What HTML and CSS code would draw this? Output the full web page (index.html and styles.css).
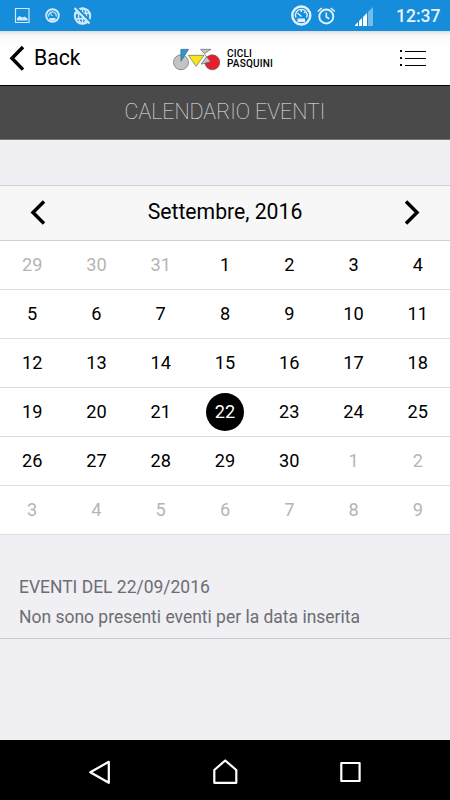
FILE: index.html
```html
<!DOCTYPE html>
<html lang="it">
<head>
<meta charset="utf-8">
<title>Calendario eventi</title>
<link rel="stylesheet" href="styles.css">
</head>
<body>
<div class="status">
  <svg class="status-icons" width="100" height="31" viewBox="0 0 100 31">
    <g fill="none" stroke="#d2e9fa">
      <path d="M15.500 8.500h13.500v14h-13.500z" stroke-width="1.200"/>
      <circle cx="52.500" cy="15.500" r="6.300" stroke-width="1.900"/>
      <path d="M48.800 16.500a3.800 3.800 0 1 1 7.400 0M52.500 16l-2-2.500" stroke-width="1.200"/>
      <circle cx="82.500" cy="16" r="7.700" stroke-width="2"/>
      <path d="M75 13.200h15M75 18.800h15M82.500 8v16" stroke-width="1.500"/>
      <ellipse cx="82.500" cy="16" rx="4" ry="7.700" stroke-width="1.500"/>
    </g>
    <path d="M17 20.500v-2.500l2.500-2 3 1.500 2-1 3 2v2zM49.500 18h6v2.800h-6z" fill="#d2e9fa"/>
    <path d="M76.500 7.500l15 15" stroke="#158dda" stroke-width="2"/>
    <path d="M74.500 8l15 15.500" stroke="#d2e9fa" stroke-width="2"/>
  </svg>
  <svg class="status-icons" width="100" height="31" viewBox="285 0 100 31">
    <g fill="none" stroke="#e3f2fc">
      <circle cx="301.300" cy="15.500" r="9" stroke-width="2.400"/>
      <path d="M296 17.500a5.800 5.800 0 1 1 10.600 0M301.500 16.500l-4-3.500M301.300 10v2M305 12l-1 1" stroke-width="1.400"/>
      <circle cx="326.300" cy="16.500" r="7" stroke-width="1.900"/>
      <path d="M326.300 12.500v4.500l3 1.800M317.800 11.500l4-3.500M334.800 11.500l-4-3.500" stroke-width="1.600"/>
    </g>
    <path d="M297.500 18.500h7.500v3.500h-7.500z" fill="#e3f2fc"/>
    <path d="M355 26v-1l3-3v4zM359 26v-5l3-3v8zM363 26v-9l4-4v13z" fill="#fff"/>
    <path d="M368 26V12l5-5v19z" fill="#73bbe9"/>
  </svg>
  <span class="clock">12:37</span>
</div>
<header class="nav">
  <a class="back">
    <svg width="16" height="26" viewBox="0 0 16 26"><path d="M14 2L3 13.300l11 11.300" fill="none" stroke="#000" stroke-width="3.500"/></svg>
    <span>Back</span>
  </a>
  <div class="brand">
    <svg width="48" height="24" viewBox="172 47 48 24">
      <g stroke="#555" stroke-width=".6">
        <circle cx="181" cy="62.300" r="7.500" fill="#c3c4c6"/>
        <circle cx="212.300" cy="62.300" r="7.500" fill="#e5202b"/>
        <path d="M180.800 49.300h7.900l-7.700 12z" fill="#209cd8"/>
        <path d="M188.300 55.300h15.700l-7.800 11z" fill="#f5e51b"/>
        <path d="M200.500 49.300h10.500l-6.500 4.300z" fill="#c3c4c6"/>
        <path d="M206.500 56.500l4.200 5.300-9.700 2.400z" fill="#c3c4c6"/>
        <path d="M204.300 53.500l2.500 4" fill="none"/>
      </g>
    </svg>
    <div class="brand-name">CICLI<br>PASQUINI</div>
  </div>
  <svg class="menu" width="28" height="20" viewBox="0 0 28 20"><path d="M2 3h2M2 10h2M2 17h2" stroke="#000" stroke-width="2"/><path d="M7 3.500h21M7 10.500h21M7 17.500h21" stroke="#000"/></svg>
</header>
<h1 class="title"><span>CALENDARIO EVENTI</span></h1>
<main>
  <div class="month">
    <svg width="16" height="26" viewBox="0 0 16 26"><path d="M14 1.500L3 12.500l11 11" fill="none" stroke="#000" stroke-width="3.500"/></svg>
    <span>Settembre, 2016</span>
    <svg width="16" height="26" viewBox="0 0 16 26"><path d="M2 1.500l11 11-11 11" fill="none" stroke="#000" stroke-width="3.500"/></svg>
  </div>
  <div class="days">
    <div class="week"><span class="out">29</span><span class="out">30</span><span class="out">31</span><span>1</span><span>2</span><span>3</span><span>4</span></div>
    <div class="week"><span>5</span><span>6</span><span>7</span><span>8</span><span>9</span><span>10</span><span>11</span></div>
    <div class="week"><span>12</span><span>13</span><span>14</span><span>15</span><span>16</span><span>17</span><span>18</span></div>
    <div class="week"><span>19</span><span>20</span><span>21</span><span><b class="today">22</b></span><span>23</span><span>24</span><span>25</span></div>
    <div class="week"><span>26</span><span>27</span><span>28</span><span>29</span><span>30</span><span class="out">1</span><span class="out">2</span></div>
    <div class="week"><span class="out">3</span><span class="out">4</span><span class="out">5</span><span class="out">6</span><span class="out">7</span><span class="out">8</span><span class="out">9</span></div>
  </div>
  <section class="events">
    <p class="events-head">EVENTI DEL 22/09/2016</p>
    <p class="events-text">Non sono presenti eventi per la data inserita</p>
  </section>
</main>
<footer class="softkeys">
  <svg width="450" height="60" viewBox="0 740 450 60" fill="none" stroke="#fff" stroke-width="2.200" stroke-linejoin="round">
    <path d="M108.800 761.800v21l-18.500-10.500z"/>
    <path d="M214.300 782.800v-12.800l10.900-9.500 11.100 9.500v12.800z"/>
    <path d="M341.300 763h18.300v18h-18.300z"/>
  </svg>
</footer>
</body>
</html>
```
FILE: styles.css
```css
* { box-sizing: border-box; }
body {
  margin: 0;
  width: 450px;
  height: 800px;
  display: flex;
  flex-direction: column;
  overflow: hidden;
  background: #efeff4;
  color: #000;
  font-family: Roboto, "Liberation Sans", sans-serif;
}
svg { display: block; flex: none; }
.status {
  height: 31px;
  display: flex;
  justify-content: space-between;
  align-items: center;
  background: #158dda;
}
.status-icons:nth-child(2) { margin-left: 185px; }
.clock {
  width: 65px;
  padding: 2px 0 0 11px;
  color: #e8f4fd;
  font-size: 17.500px;
  font-weight: 500;
  line-height: 29px;
}
.nav {
  height: 55px;
  display: grid;
  grid-template-columns: 172px 1fr 52px;
  align-items: center;
  border-bottom: 1px solid #000;
  background: linear-gradient(#ddd, #f7f7f7 4px, #fff 14px);
}
.back {
  display: flex;
  align-items: center;
  gap: 9px;
  padding-left: 9px;
  font-size: 21.200px;
}
.back span { margin-top: -2px; }
.brand { display: flex; align-items: center; gap: 7px; padding-top: 2px; }
.brand-name {
  font: 500 10px/10.500px Roboto, sans-serif;
  letter-spacing: .2px;
}
.title {
  height: 54px;
  margin: 0;
  text-align: center;
  font-size: 21.400px;
  font-weight: 100;
  line-height: 51px;
  color: #eee;
  background: #4a4a4a;
  border-bottom: 1px solid #777;
}
main { flex: 1; padding-top: 45px; }
.month {
  height: 56px;
  padding: 0 30px;
  display: flex;
  align-items: center;
  justify-content: space-between;
  background: #f7f7f8;
  border: solid #d2d2d6;
  border-width: 1px 0;
  font-size: 21.200px;
}
.month span { margin-top: -3px; }
.days { background: #fff; }
.week {
  height: 49px;
  padding-bottom: 1px;
  display: grid;
  grid-template-columns: repeat(7, 1fr);
  align-items: center;
  justify-items: center;
  border-bottom: 1px solid #dcdcde;
  font-size: 18.200px;
}
.out { color: #b5b5b5; }
.today {
  display: block;
  width: 38px;
  height: 38px;
  margin-top: 1px;
  border-radius: 50%;
  background: #000;
  color: #fff;
  font-weight: 400;
  line-height: 38px;
  text-align: center;
}
.events {
  height: 104px;
  padding: 37px 19px 0;
  border-bottom: 1px solid #c8c7cc;
  color: #6d6d72;
  font-size: 17.480px;
  line-height: 30px;
}
.events p { margin: 0; }
.softkeys { height: 60px; background: #000; }
```
